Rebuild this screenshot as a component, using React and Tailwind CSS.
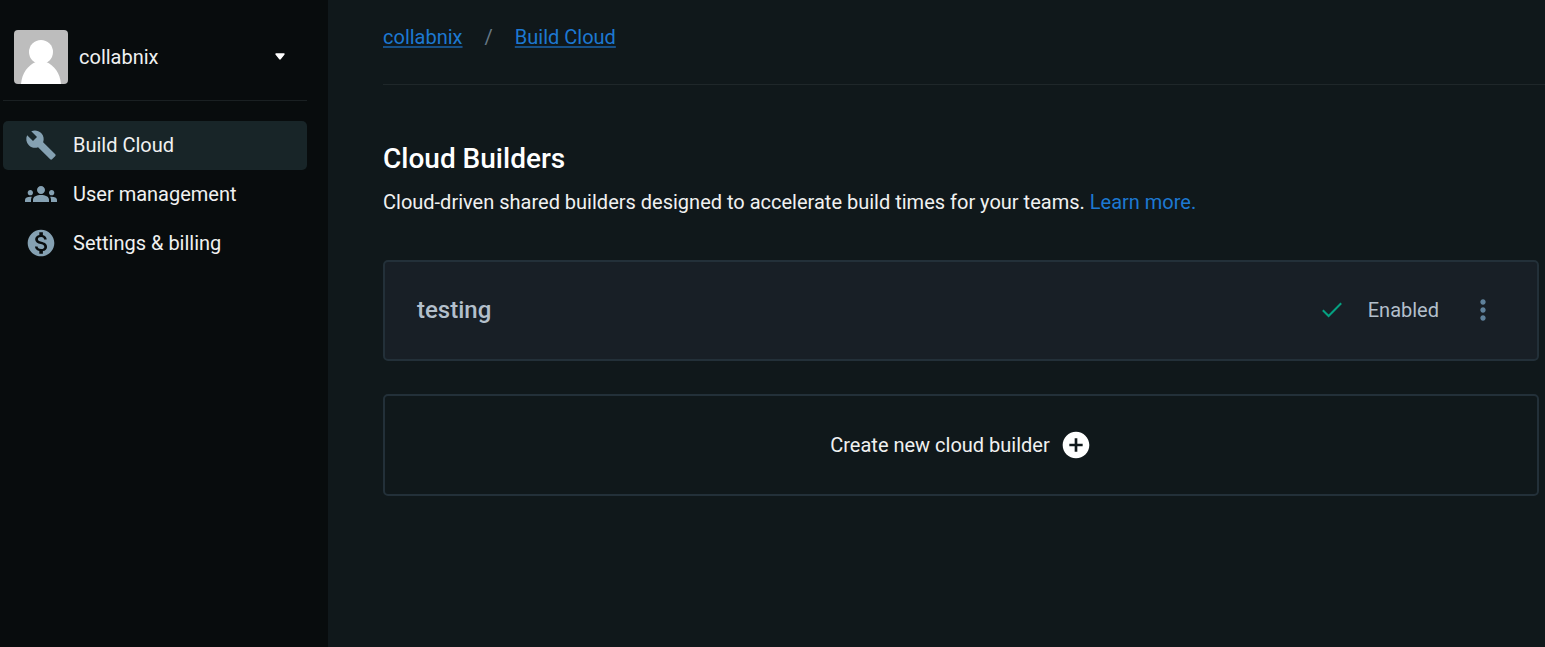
import { MdBuild, MdGroups, MdMonetizationOn, MdAddCircle, MdMoreVert } from "react-icons/md";

function Avatar() {
  return (
    <svg viewBox="0 0 54 54" className="size-[54px] shrink-0 rounded" role="img" aria-label="Profile picture">
      <rect width="54" height="54" fill="#bdbdbd" />
      <circle cx="27" cy="22" r="12" fill="#fff" />
      <path d="M7 54C8 43 14 35 22 32H32C40 35 46 43 47 54Z" fill="#fff" />
    </svg>
  );
}

function Caret() {
  return (
    <svg viewBox="0 0 10 7" className="h-[7px] w-[10px]" aria-hidden="true">
      <path d="M1 1H9L5.6 5.4Q5 6 4.4 5.4Z" fill="#fff" stroke="#fff" strokeWidth="1.4" strokeLinejoin="round" />
    </svg>
  );
}

function Check() {
  return (
    <svg viewBox="0 0 20 16" className="mr-[26px] h-4 w-5" fill="none" stroke="#05a081" strokeWidth="2" aria-hidden="true">
      <path d="M.8 8.2L6.6 14L19.2 1.3" />
    </svg>
  );
}

const items = [
  { label: "Build Cloud", Icon: MdBuild, active: true },
  { label: "User management", Icon: MdGroups },
  { label: "Settings & billing", Icon: MdMonetizationOn },
];

function Sidebar() {
  return (
    <aside className="w-[328px] shrink-0 bg-[#080c0d] pl-[3px] pr-[21px]">
      <button type="button" className="flex h-[101px] w-full items-center border-b border-[#1a2022] pl-[11px] pr-[22px] pt-[13px] text-left">
        <Avatar />
        <span className="ml-[11px] flex-1">collabnix</span>
        <Caret />
      </button>
      <nav className="mt-5 flex flex-col">
        {items.map(({ label, Icon, active }) => (
          <a
            key={label}
            href="#"
            aria-current={active ? "page" : undefined}
            className={`flex h-[49px] items-center gap-4 rounded-[5px] pb-[2px] pl-[22px] ${active ? "bg-[#182528]" : ""}`}
          >
            <Icon className="size-8 text-[#85a1b2]" />
            <span>{label}</span>
          </a>
        ))}
      </nav>
    </aside>
  );
}

export default function App() {
  return (
    <div className="flex min-h-screen bg-[#10181b] font-['Roboto',sans-serif] text-xl leading-7 text-[#f0f1f1]">
      <Sidebar />
      <main className="min-w-0 flex-1 pl-[55px]">
        <nav aria-label="Breadcrumb" className="flex h-[85px] items-center gap-[22px] border-b border-[#1f272a] pb-[10px] text-[#1d78d2]">
          <a href="#" className="underline decoration-[#174f85] decoration-2 underline-offset-2">collabnix</a>
          <span className="text-[#677986]">/</span>
          <a href="#" className="underline decoration-[#174f85] decoration-2 underline-offset-2">Build Cloud</a>
        </nav>
        <div className="pr-[6px] pt-14">
          <h1 className="text-[28px] font-medium leading-9 text-white">Cloud Builders</h1>
          <p className="mt-[11px]">
            Cloud-driven shared builders designed to accelerate build times for your teams.{" "}
            <a href="#" className="text-[#1d78d2]">Learn more.</a>
          </p>
          <section className="mt-11 flex h-[101px] items-center rounded-[5px] border-2 border-[#233039] bg-[#181f26] pb-[2px] pl-8 pr-[38px] text-[#b3bfcb]">
            <h2 className="flex-1 text-2xl font-medium">testing</h2>
            <Check />
            <span>Enabled</span>
            <button type="button" aria-label="Builder options" className="ml-7 text-[#5f819b]">
              <MdMoreVert className="size-8" />
            </button>
          </section>
          <button type="button" className="mt-[33px] flex h-[102px] w-full items-center justify-center gap-[10px] rounded-[5px] border-2 border-[#233039]">
            Create new cloud builder
            <MdAddCircle className="size-8 text-white" />
          </button>
        </div>
      </main>
    </div>
  );
}
